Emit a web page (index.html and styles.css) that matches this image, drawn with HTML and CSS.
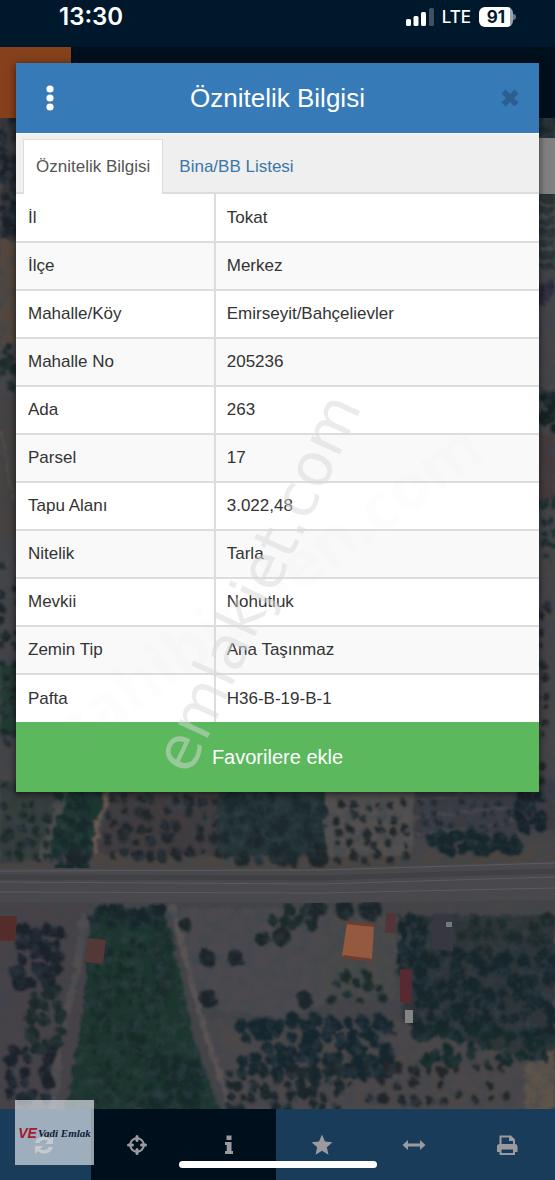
FILE: index.html
```html
<!DOCTYPE html>
<html lang="tr">
<head>
    <meta charset="UTF-8">
    <meta name="viewport" content="width=device-width, initial-scale=1.0">
    <title>Öznitelik Bilgisi</title>
    <link rel="stylesheet" href="styles.css">
</head>
<body>
    <svg class="map" id="map" viewBox="0 0 555 1180" preserveAspectRatio="xMidYMin slice" aria-hidden="true">
        <defs>
            <filter id="rough" x="0" y="0" width="100%" height="100%">
                <feTurbulence type="fractalNoise" baseFrequency="0.12" numOctaves="3" seed="4" result="noise"/>
                <feDisplacementMap in="SourceGraphic" in2="noise" scale="9" result="shape"/>
                <feGaussianBlur in="shape" stdDeviation="0.8"/>
            </filter>
            <filter id="grain" x="0" y="0" width="100%" height="100%">
                <feTurbulence type="fractalNoise" baseFrequency="0.09" numOctaves="4" seed="9"/>
                <feColorMatrix values="0 0 0 0 0.04  0 0 0 0 0.06  0 0 0 0 0.08  0 2.4 0 0 -1"/>
            </filter>
        </defs>
        <rect width="555" height="1180" fill="#454447"/>
        <g filter="url(#rough)">
            <!-- left edge -->
            <path fill="#353439" d="M0 110h24v130H0z"/>
            <path fill="#54463d" d="M0 240h24v105H0z"/>
            <path fill="#46423f" d="M0 400h24v140H0z"/>
            <path fill="#213b33" d="M0 665h24v70H0z"/>
            <path stroke="#5d5d5d" fill="none" d="M0 430l14 70"/>
            <!-- right edge -->
            <path fill="#2a3336" d="M530 110h25v160h-25z"/>
            <path stroke="#465051" stroke-width="2" d="M535 205h20M535 216h20M535 227h20M535 238h20M535 249h20M535 260h20"/>
            <path fill="#2a2838" d="M535 285l20-6v18l-20 10z"/>
            <path fill="#453b3d" d="M530 435h25v65h-25z"/>
            <!-- north of the road -->
            <path fill="#363d3b" d="M0 780h65l-25 90H0z"/>
            <path fill="#1d352f" d="M65 780h42l-17 85H48z"/>
            <path fill="#403b3d" d="M112 780h105v85H95z"/>
            <path fill="#263539" d="M217 780h108v80H217z"/>
            <path fill="#524f4f" d="M325 780h88v84h-88z"/>
            <path fill="#3b3b42" d="M415 780h140v50l-140 8z"/>
            <path stroke="#58585c" fill="none" d="M415 800l100-8M415 817l100-10M415 834l100-12"/>
            <path stroke="#4b4b4c" stroke-width="7" fill="none" d="M64 790L38 866"/>
            <path stroke="#6e5b51" stroke-width="4" fill="none" d="M110 790L97 828L94 866"/>
            <path fill="#4b4542" d="M100 853l130 4 180-2 145-12v26l-200 8H0v-14z"/>
            <!-- south of the road -->
            <path fill="#464246" d="M0 905h90v205H0z"/>
            <path fill="#1e362e" d="M92 910h70l20 70 12 60 26 70H64l18-90z"/>
            <path fill="#4c4a4e" d="M178 908h155l-6 95-45 16-75-12-18-40z"/>
            <path fill="#4a4848" d="M325 915h70v85h-70z"/>
            <path fill="#2d3639" d="M398 915h157v150l-150-25z"/>
            <path fill="#4c4748" d="M205 1020h190l150 45v48H235z"/>
            <path fill="#5d5349" d="M525 1065l30-15v60h-30z"/>
            <path stroke="#514e50" stroke-width="7" fill="none" d="M85 915L76 972L60 1045L52 1112"/>
            <path stroke="#5a5352" stroke-width="6" fill="none" d="M172 905L186 960L203 1025L232 1112"/>
        </g>
        <g id="trees" filter="url(#rough)"></g>
        <rect y="118" width="555" height="990" filter="url(#grain)" opacity="0.5"/>
        <!-- road -->
        <path fill="#49484c" d="M0 868l300 1 255-8v39l-240 3-315-1z"/>
        <path fill="none" stroke="#5c5c60" d="M0 871l320-1 235-7"/>
        <path fill="none" stroke="#414145" stroke-width="5" d="M0 877l320 1 235-7"/>
        <path fill="none" stroke="#5b5b60" d="M0 882l320 2 235-7M0 892l320 1 235-5"/>
        <!-- buildings -->
        <path fill="#542d2b" d="M0 916h17l-2 25H0z"/>
        <path fill="#533838" d="M88 938l18 2-3 24-18-2z"/>
        <path fill="#945a3f" d="M347 923l27 2-2 34-30-3z"/>
        <path fill="#6e3c31" d="M345 921l30 3v3l-30-3zM344 955l28 4v3l-30-4z"/>
        <path fill="#533539" d="M386 913h10v20h-11z"/>
        <path fill="#373742" d="M433 914l20 1v36l-21-2z"/>
        <path fill="#562a30" d="M400 969l12 1-1 34-11-2z"/>
        <path fill="#848486" d="M405 1010h8v13h-8z"/>
        <path fill="#6f7c86" d="M446 922h6v5h-6z"/>
    </svg>

    <header class="status-bar">
        <span class="clock">13:30</span>
        <div class="status-right">
            <svg class="signal" viewBox="0 0 28 18" aria-hidden="true">
                <rect x="0" y="11" width="5" height="7" rx="1.5"/>
                <rect x="7.500" y="8" width="5" height="10" rx="1.500"/>
                <rect x="15" y="4" width="5" height="14" rx="1.500"/>
                <rect x="23" y="0" width="5" height="18" rx="1.500" opacity="0.25"/>
            </svg>
            <span class="network">LTE</span>
            <span class="battery">91</span>
        </div>
    </header>
    <div class="app-bar"><div class="app-bar-menu"></div></div>
    <div class="search-strip"></div>

    <nav class="toolbar">
        <button class="tool" aria-label="Yenile">
            <svg viewBox="0 0 24 24"><path d="M3 10a9 9 0 0 1 15-4l3-3v8h-8l3-3a6 6 0 0 0-9 2zM21 14a9 9 0 0 1-15 4l-3 3v-8h8l-3 3a6 6 0 0 0 9-2z"/></svg>
        </button>
        <button class="tool dark" aria-label="Konumum">
            <svg viewBox="0 0 24 24"><g fill="none" stroke="currentColor"><circle cx="12" cy="12" r="6.800" stroke-width="2"/><path stroke-width="3" stroke-linecap="round" d="M12 3.500v4M12 16.500v4M3.500 12h4M16.500 12h4"/></g></svg>
        </button>
        <button class="tool dark" aria-label="Bilgi">
            <svg viewBox="0 0 24 24"><path d="M9.500 2.500h5v4.500h-5zM8 9h6.500v9H16v3H8v-3h1.700v-6H8z"/></svg>
        </button>
        <button class="tool" aria-label="Favoriler">
            <svg viewBox="0 0 24 24"><path d="M12 1.500l3 7 7.500.7-5.700 5 1.700 7.500L12 17.800l-6.500 3.900 1.700-7.500-5.700-5 7.500-.7z"/></svg>
        </button>
        <button class="tool" aria-label="Ölçüm">
            <svg viewBox="0 0 24 24"><path d="M0.500 12l5.500-5v3.500h12V7l5.500 5-5.500 5v-3.500H6V17z"/></svg>
        </button>
        <button class="tool" aria-label="Yazdır">
            <svg viewBox="0 0 24 24"><path fill-rule="evenodd" d="M4.500 11V2.500H16L20 6.500V11c1.700 0 2.500 1 2.500 2.500V19H20v3H4.500v-3H2v-5.500C2 12 3 11 4.500 11zM6.500 4.500V11H18V8h-4V4.500zM6.500 16.500V20H18v-3.500z"/></svg>
        </button>
    </nav>

    <div class="overlay">
        <section class="modal" role="dialog" aria-labelledby="modal-title">
            <div class="modal-header">
                <button class="menu-btn" aria-label="Menü">
                    <svg viewBox="0 0 8 26"><circle cx="4" cy="4" r="3.600"/><circle cx="4" cy="13" r="3.600"/><circle cx="4" cy="22" r="3.600"/></svg>
                </button>
                <h1 id="modal-title">Öznitelik Bilgisi</h1>
                <button class="close-btn" aria-label="Kapat">
                    <svg viewBox="0 0 18 18"><path d="M4.500 0.500L9 5l4.500-4.500 4 4L13 9l4.500 4.500-4 4L9 13l-4.500 4.500-4-4L5 9 .5 4.500z"/></svg>
                </button>
            </div>
            <div class="tabs" role="tablist">
                <button class="tab active" role="tab" aria-selected="true">Öznitelik Bilgisi</button>
                <button class="tab" role="tab" aria-selected="false">Bina/BB Listesi</button>
            </div>
            <table class="attributes">
                <tbody>
                    <tr><th scope="row">İl</th><td>Tokat</td></tr>
                    <tr><th scope="row">İlçe</th><td>Merkez</td></tr>
                    <tr><th scope="row">Mahalle/Köy</th><td>Emirseyit/Bahçelievler</td></tr>
                    <tr><th scope="row">Mahalle No</th><td>205236</td></tr>
                    <tr><th scope="row">Ada</th><td>263</td></tr>
                    <tr><th scope="row">Parsel</th><td>17</td></tr>
                    <tr><th scope="row">Tapu Alanı</th><td>3.022,48</td></tr>
                    <tr><th scope="row">Nitelik</th><td>Tarla</td></tr>
                    <tr><th scope="row">Mevkii</th><td>Nohutluk</td></tr>
                    <tr><th scope="row">Zemin Tip</th><td>Ana Taşınmaz</td></tr>
                    <tr><th scope="row">Pafta</th><td>H36-B-19-B-1</td></tr>
                </tbody>
            </table>
            <button class="favorite-btn">Favorilere ekle</button>
            <span class="watermark watermark-faint">sahibinden.com</span>
            <span class="watermark watermark-main">emlakjet.com</span>
        </section>
    </div>

    <div class="agency">
        <span class="agency-mark">VE</span><span class="agency-name">Vadi Emlak</span>
    </div>
    <div class="home-indicator"></div>

    <script src="map.js"></script>
</body>
</html>
```
FILE: styles.css
```css
* {
    margin: 0;
    padding: 0;
    box-sizing: border-box;
}

body {
    position: relative;
    min-height: 100vh;
    display: flex;
    flex-direction: column;
    overflow-x: hidden;
    background: #424144;
    color: #333;
    font-family: "Liberation Sans", Arial, sans-serif;
    font-size: 17px;
}

button {
    border: none;
    background: none;
    font: inherit;
    color: inherit;
    cursor: pointer;
}

svg {
    display: block;
    fill: currentColor;
}

.map {
    position: absolute;
    inset: 0;
    width: 100%;
    height: 100%;
}

/* status bar */
.status-bar {
    position: relative;
    display: flex;
    justify-content: space-between;
    height: 47px;
    padding: 5px 42px 0 59px;
    background: #00182c;
    color: #fff;
    font-family: Inter, sans-serif;
}

.clock {
    font-size: 24px;
    font-weight: 600;
    line-height: 24px;
}

.status-right {
    display: flex;
    gap: 8px;
    height: 24px;
    align-items: center;
}

.signal {
    width: 28px;
    height: 18px;
}

.network {
    font-size: 17px;
    font-weight: 500;
}

.battery {
    position: relative;
    width: 34px;
    border-radius: 6px;
    background: linear-gradient(90deg, #fff 91%, #9aa3ab 91%);
    color: #00182c;
    font-size: 17px;
    font-weight: 700;
    line-height: 20px;
    text-align: center;
}

.battery::after {
    content: "";
    position: absolute;
    left: 100%;
    top: 7px;
    width: 3px;
    height: 6px;
    border-radius: 0 3px 3px 0;
    background: #6b7884;
}

.app-bar {
    position: relative;
    height: 71px;
    background: #000f1c;
}

.app-bar-menu {
    width: 71px;
    height: 71px;
    background: #86401c;
}

.search-strip {
    position: relative;
    align-self: flex-end;
    width: 71px;
    height: 56px;
    margin-top: 20px;
    background: #808080;
}

/* bottom toolbar */
.toolbar {
    position: relative;
    display: grid;
    grid-template-columns: repeat(6, 1fr);
    height: 71px;
    margin-top: auto;
    margin-left: -2px;
    padding-right: 2px;
    background: #1a3c5b;
}

.tool {
    display: flex;
    justify-content: center;
    align-items: center;
    color: #9b9b9f;
}

.tool.dark {
    background: #000f1c;
}

.tool svg {
    width: 24px;
    height: 24px;
}

/* dialog */
.overlay {
    position: absolute;
    inset: 0;
    padding: 63px 16px;
}

.modal {
    position: relative;
    background: #fff;
    box-shadow: 0 2px 8px rgba(0, 0, 0, 0.6);
}

.modal-header {
    display: flex;
    justify-content: space-between;
    align-items: center;
    height: 70px;
    padding: 0 20px 0 30px;
    background: #367ab8;
    color: #fff;
}

.modal-header h1 {
    font-size: 26px;
    font-weight: 400;
}

.menu-btn svg {
    width: 8px;
    height: 26px;
}

.close-btn {
    color: #2a5f8f;
}

.close-btn svg {
    width: 18px;
    height: 18px;
}

.tabs {
    display: flex;
    height: 61px;
    padding: 5px 7px 0;
    background: #efefef;
    border-top: 1px solid #fff;
    border-bottom: 2px solid #ddd;
}

.tab {
    height: 55px;
    padding: 0 15px;
    border: 1px solid transparent;
    color: #3a77a8;
}

.tab.active {
    padding: 0 12px;
    background: #fff;
    border-color: #ddd;
    border-bottom: none;
    color: #555;
}

.attributes {
    width: 100%;
    table-layout: fixed;
    border-collapse: collapse;
}

.attributes tr {
    height: 48px;
}

.attributes tr:nth-child(even) {
    background: #f9f9f9;
}

.attributes tr + tr {
    border-top: 2px solid #ddd;
}

.attributes th {
    width: 38%;
    padding: 0 12px;
    border-right: 2px solid #ddd;
    font-weight: 400;
    text-align: left;
}

.attributes td {
    padding: 0 11px;
}

.favorite-btn {
    display: block;
    width: 100%;
    height: 70px;
    background: #5bb85d;
    color: #fff;
    font-size: 20px;
}

/* watermarks lie over the dialog */
.watermark {
    position: absolute;
    transform-origin: 0 100%;
    line-height: 1;
    white-space: nowrap;
    pointer-events: none;
}

.watermark-main {
    left: 182px;
    bottom: 12px;
    color: rgba(215, 215, 215, 0.5);
    font-family: "DejaVu Sans", sans-serif;
    font-size: 60px;
    transform: rotate(-65deg);
}

.watermark-faint {
    left: 65px;
    bottom: 30px;
    color: rgba(128, 128, 128, 0.02);
    font-family: "Open Sans", sans-serif;
    font-size: 64px;
    font-weight: 700;
    transform: rotate(-36deg);
}

.agency {
    position: absolute;
    left: 15px;
    bottom: 15px;
    display: flex;
    align-items: center;
    justify-content: center;
    gap: 1px;
    width: 79px;
    height: 65px;
    background: rgba(215, 222, 230, 0.7);
    white-space: nowrap;
}

.agency-mark {
    color: #a5182f;
    font-size: 14px;
    font-style: italic;
    font-weight: 700;
}

.agency-name {
    color: #0c2238;
    font-family: "Liberation Serif", serif;
    font-size: 11px;
    font-style: italic;
    font-weight: 700;
}

.home-indicator {
    position: absolute;
    left: 50%;
    bottom: 12px;
    width: 198px;
    height: 7px;
    margin-left: -99px;
    border-radius: 4px;
    background: #fff;
}
```
FILE: map.js
```js
// Fills the orchards of the map with trees
const group = document.getElementById('trees');
let seed = 7;

function random() {
    seed = (seed * 16807) % 2147483647;
    return seed / 2147483647;
}

function tree(x, y, r, color) {
    const el = document.createElementNS('http://www.w3.org/2000/svg', 'ellipse');
    el.setAttribute('cx', x);
    el.setAttribute('cy', y);
    el.setAttribute('rx', r);
    el.setAttribute('ry', r * 1.1);
    el.setAttribute('fill', color);
    group.appendChild(el);
}

// x, y, width, height, spacing, radius, color
const orchards = [
    [0, 120, 18, 120, 11, 5, '#1c2129'],
    [0, 345, 16, 40, 9, 5, '#1b2a2b'],
    [0, 560, 16, 225, 14, 4, '#1f2728'],
    [540, 120, 15, 70, 8, 4, '#1b282b'],
    [543, 392, 14, 35, 8, 6, '#132024'],
    [540, 495, 15, 60, 11, 4, '#1b2d2d'],
    [540, 600, 15, 185, 15, 4, '#20262b'],
    [4, 800, 45, 60, 13, 4, '#1b2a2b'],
    [58, 795, 28, 70, 11, 5, '#172a29'],
    [108, 797, 105, 60, 13, 5, '#20282b'],
    [220, 795, 100, 65, 12, 6, '#1b2b2f'],
    [336, 802, 75, 60, 13, 4, '#20282b'],
    [420, 798, 95, 30, 12, 3, '#212a31'],
    [430, 835, 90, 18, 9, 6, '#18272b'],
    [518, 795, 30, 35, 10, 6, '#172329'],
    [18, 930, 48, 60, 12, 7, '#1a242b'],
    [30, 990, 32, 60, 13, 6, '#1e2a2c'],
    [8, 1045, 45, 60, 12, 7, '#1b242a'],
    [92, 908, 70, 14, 9, 7, '#16272a'],
    [92, 940, 70, 165, 12, 4, '#182c27'],
    [155, 915, 18, 80, 11, 5, '#1a2d2b'],
    [150, 1060, 55, 48, 11, 6, '#18292a'],
    [270, 910, 55, 14, 9, 6, '#1b292b'],
    [330, 970, 60, 35, 12, 5, '#1c2c2a'],
    [240, 1020, 145, 50, 12, 7, '#19272d'],
    [225, 1068, 120, 40, 12, 5, '#1c282c'],
    [400, 920, 30, 60, 10, 6, '#19272b'],
    [460, 920, 90, 40, 14, 6, '#1c292b'],
    [415, 955, 135, 80, 12, 7, '#19262c'],
    [420, 1030, 130, 28, 12, 6, '#192c2a'],
    [350, 1065, 165, 42, 15, 5, '#20282b']
];

orchards.forEach(function([x, y, w, h, gap, r, color]) {
    for (let ty = y; ty < y + h; ty += gap) {
        for (let tx = x; tx < x + w; tx += gap) {
            if (random() < 0.12) continue;
            tree(tx + random() * 7, ty + random() * 7, r * (0.6 + random() * 0.6), color);
        }
    }
});

// single trees
[
    [75, 858, 10], [207, 958, 8], [235, 958, 8], [263, 939, 7], [281, 936, 9],
    [345, 910, 9], [370, 909, 11], [316, 908, 10], [305, 1000, 8], [240, 860, 6],
    [282, 858, 8], [318, 857, 10], [256, 839, 8], [185, 924, 6], [208, 998, 9]
].forEach(function([x, y, r]) {
    tree(x, y, r, '#1b272a');
});
```
